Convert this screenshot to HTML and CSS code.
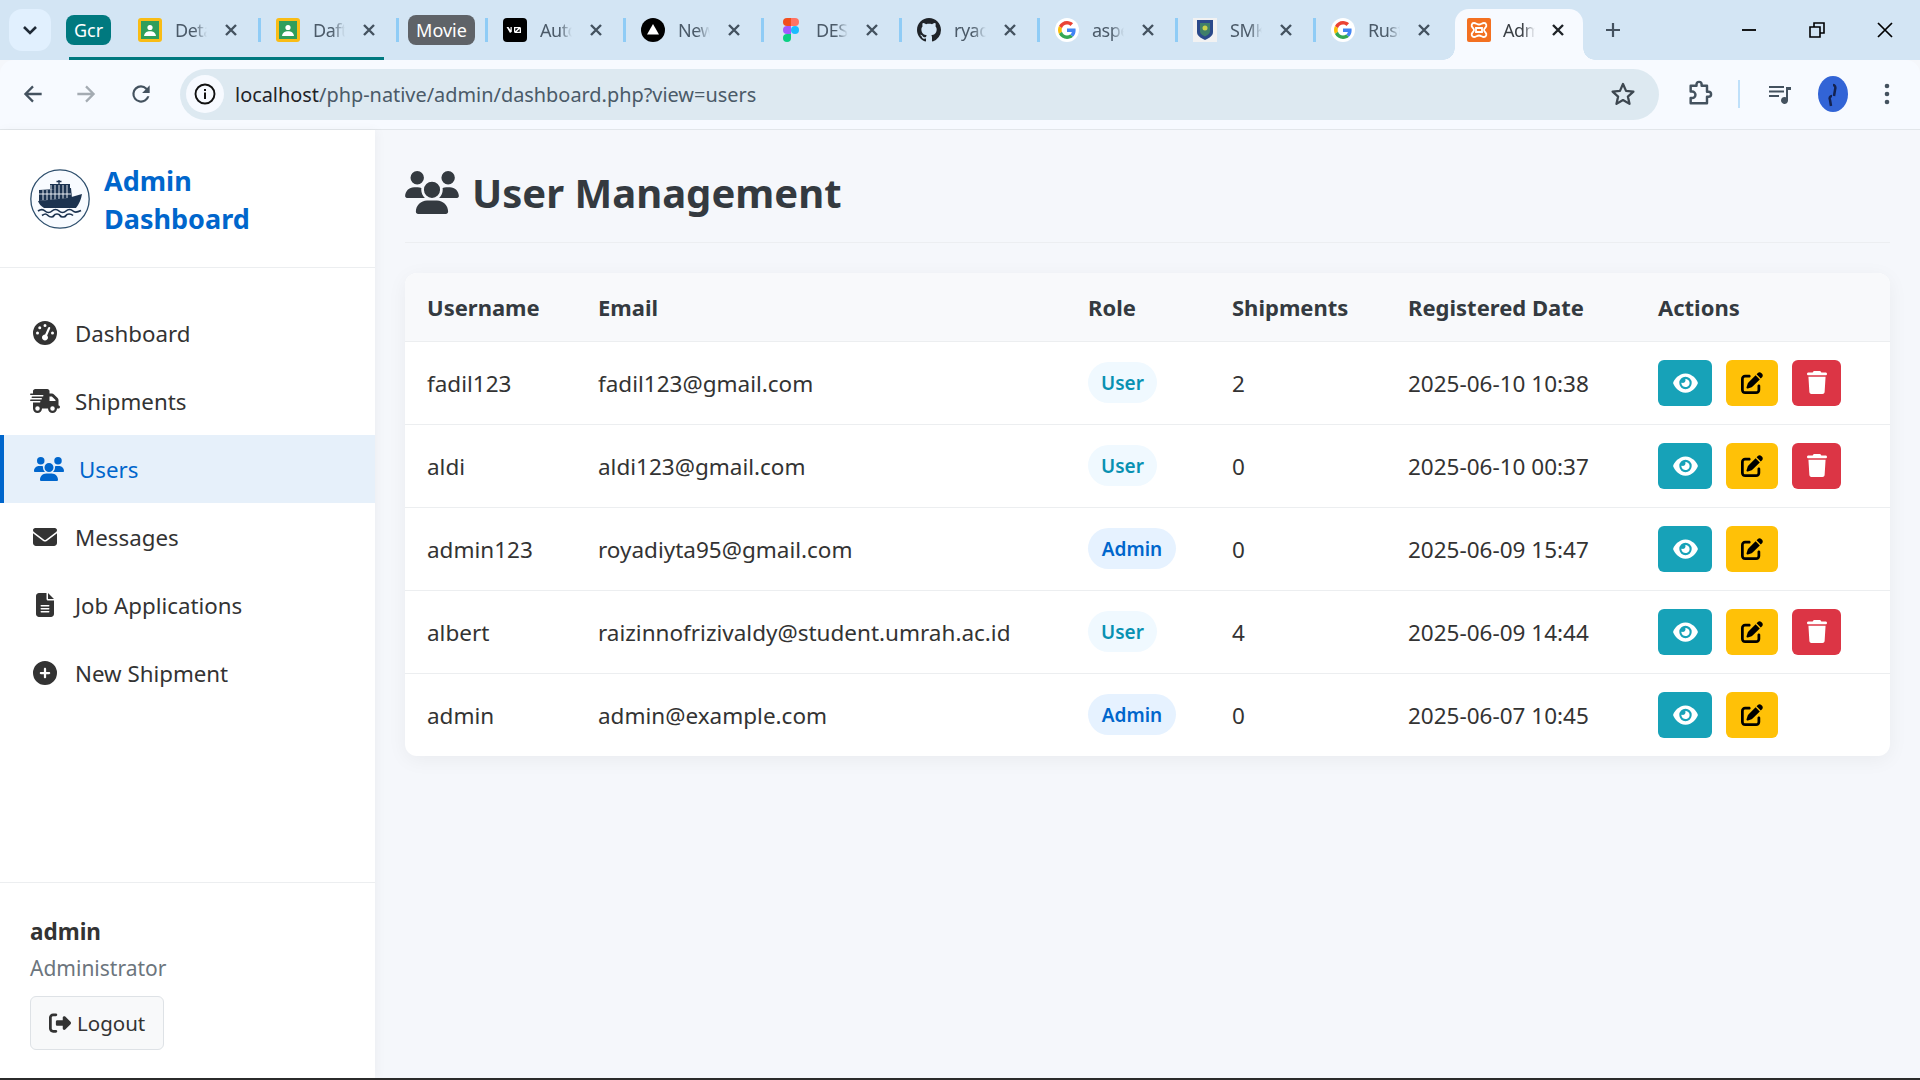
FILE: index.html
```html
<!DOCTYPE html>
<html lang="en">
<head>
    <meta charset="UTF-8">
    <meta name="viewport" content="width=device-width, initial-scale=1.0">
    <title>User Management</title>
    <link rel="stylesheet" href="styles.css">
</head>
<body>
    <svg class="sprites" aria-hidden="true">
        <symbol id="i-gauge" viewBox="0 0 512 512"><path d="M0 256a256 256 0 1 1 512 0A256 256 0 1 1 0 256zM288 96a32 32 0 1 0 -64 0 32 32 0 1 0 64 0zM256 416c35.3 0 64-28.7 64-64c0-17.4-6.9-33.1-18.1-44.6L366 161.7c5.3-12.1-.2-26.3-12.3-31.6s-26.3 .2-31.6 12.3L257.9 288c-.6 0-1.3 0-1.9 0c-35.3 0-64 28.7-64 64s28.7 64 64 64zM176 144a32 32 0 1 0 -64 0 32 32 0 1 0 64 0zM96 288a32 32 0 1 0 0-64 32 32 0 1 0 0 64zm352-32a32 32 0 1 0 -64 0 32 32 0 1 0 64 0z"/></symbol>
        <symbol id="i-truck" viewBox="0 0 640 512"><path d="M112 0C85.5 0 64 21.5 64 48V96H16c-8.8 0-16 7.2-16 16s7.2 16 16 16H64 272c8.8 0 16 7.2 16 16s-7.2 16-16 16H64 48c-8.8 0-16 7.2-16 16s7.2 16 16 16H64 240c8.8 0 16 7.2 16 16s-7.2 16-16 16H64 16c-8.8 0-16 7.2-16 16s7.2 16 16 16H64 208c8.8 0 16 7.2 16 16s-7.2 16-16 16H64V416c0 53 43 96 96 96s96-43 96-96H384c0 53 43 96 96 96s96-43 96-96h32c17.7 0 32-14.3 32-32s-14.3-32-32-32V288 256 237.3c0-17-6.7-33.3-18.7-45.3L512 114.7c-12-12-28.3-18.7-45.3-18.7H416V48c0-26.5-21.5-48-48-48H112zM544 237.3V256H416V160h50.7L544 237.3zM160 368a48 48 0 1 1 0 96 48 48 0 1 1 0-96zm272 48a48 48 0 1 1 96 0 48 48 0 1 1 -96 0z"/></symbol>
        <symbol id="i-users" viewBox="0 0 640 512"><path d="M144 0a80 80 0 1 1 0 160A80 80 0 1 1 144 0zM512 0a80 80 0 1 1 0 160A80 80 0 1 1 512 0zM0 298.7C0 239.8 47.8 192 106.7 192h42.7c15.9 0 31 3.5 44.6 9.7c-1.3 7.2-1.9 14.7-1.9 22.3c0 38.2 16.8 72.5 43.3 96c-.2 0-.4 0-.7 0H21.3C9.6 320 0 310.4 0 298.7zM405.3 320c-.2 0-.4 0-.7 0c26.6-23.5 43.3-57.8 43.3-96c0-7.6-.7-15-1.9-22.3c13.6-6.3 28.7-9.7 44.6-9.7h42.7C592.2 192 640 239.8 640 298.7c0 11.8-9.6 21.3-21.3 21.3H405.3zM224 224a96 96 0 1 1 192 0 96 96 0 1 1 -192 0zM128 485.3C128 411.7 187.7 352 261.3 352H378.7C452.3 352 512 411.7 512 485.3c0 14.7-11.9 26.7-26.7 26.7H154.7c-14.7 0-26.7-11.9-26.7-26.7z"/></symbol>
        <symbol id="i-envelope" viewBox="0 0 512 512"><path d="M48 64C21.5 64 0 85.5 0 112c0 15.1 7.1 29.3 19.2 38.4L236.8 313.6c11.4 8.5 27 8.5 38.4 0L492.8 150.4c12.1-9.1 19.2-23.3 19.2-38.4c0-26.5-21.5-48-48-48H48zM0 176V384c0 35.3 28.7 64 64 64H448c35.3 0 64-28.7 64-64V176L294.4 339.2c-22.8 17.1-54 17.1-76.8 0L0 176z"/></symbol>
        <symbol id="i-file" viewBox="0 0 384 512"><path d="M64 0C28.7 0 0 28.7 0 64V448c0 35.3 28.7 64 64 64H320c35.3 0 64-28.7 64-64V160H256c-17.7 0-32-14.3-32-32V0H64zM256 0V128H384L256 0zM112 256H272c8.8 0 16 7.2 16 16s-7.2 16-16 16H112c-8.8 0-16-7.2-16-16s7.2-16 16-16zm0 64H272c8.8 0 16 7.2 16 16s-7.2 16-16 16H112c-8.8 0-16-7.2-16-16s7.2-16 16-16zm0 64H272c8.8 0 16 7.2 16 16s-7.2 16-16 16H112c-8.8 0-16-7.2-16-16s7.2-16 16-16z"/></symbol>
        <symbol id="i-plus" viewBox="0 0 512 512"><path d="M256 512A256 256 0 1 0 256 0a256 256 0 1 0 0 512zM232 344V280H168c-13.3 0-24-10.7-24-24s10.7-24 24-24h64V168c0-13.3 10.7-24 24-24s24 10.7 24 24v64h64c13.3 0 24 10.7 24 24s-10.7 24-24 24H280v64c0 13.3-10.7 24-24 24s-24-10.7-24-24z"/></symbol>
        <symbol id="i-logout" viewBox="0 0 512 512"><path d="M377.9 105.9L500.7 228.7c7.2 7.2 11.3 17.1 11.3 27.3s-4.1 20.1-11.3 27.3L377.9 406.1c-6.4 6.4-15 9.9-24 9.9c-18.7 0-33.9-15.2-33.9-33.9l0-62.1-128 0c-17.7 0-32-14.3-32-32l0-64c0-17.7 14.3-32 32-32l128 0 0-62.1c0-18.7 15.2-33.9 33.9-33.9c9 0 17.6 3.6 24 9.9zM160 96L96 96c-17.7 0-32 14.3-32 32l0 256c0 17.7 14.3 32 32 32l64 0c17.7 0 32 14.3 32 32s-14.3 32-32 32l-64 0c-53 0-96-43-96-96L0 128C0 75 43 32 96 32l64 0c17.7 0 32 14.3 32 32s-14.3 32-32 32z"/></symbol>
        <symbol id="i-eye" viewBox="0 0 576 512"><path d="M288 32c-80.8 0-145.5 36.8-192.6 80.6C48.6 156 17.3 208 2.5 243.7c-3.3 7.9-3.3 16.7 0 24.6C17.3 304 48.6 356 95.4 399.4C142.5 443.2 207.2 480 288 480s145.5-36.8 192.6-80.6c46.8-43.5 78.1-95.4 93-131.1c3.3-7.9 3.3-16.7 0-24.6c-14.9-35.7-46.2-87.7-93-131.1C433.5 68.8 368.8 32 288 32zM144 256a144 144 0 1 1 288 0 144 144 0 1 1 -288 0zm144-64c0 35.3-28.7 64-64 64c-7.1 0-13.9-1.2-20.3-3.3c-5.5-1.8-11.9 1.6-11.7 7.4c.3 6.9 1.3 13.8 3.2 20.7c13.7 51.2 66.4 81.6 117.6 67.9s81.6-66.4 67.9-117.6c-11.1-41.5-47.8-69.4-88.6-71.1c-5.8-.2-9.2 6.1-7.4 11.7c2.1 6.4 3.3 13.2 3.3 20.3z"/></symbol>
        <symbol id="i-edit" viewBox="0 0 512 512"><path d="M471.6 21.7c-21.9-21.9-57.3-21.9-79.2 0L362.3 51.7l97.9 97.9 30.1-30.1c21.9-21.9 21.9-57.3 0-79.2L471.6 21.7zm-299.2 220c-6.1 6.1-10.8 13.6-13.5 21.9l-29.6 88.8c-2.9 8.6-.6 18.1 5.8 24.6s15.9 8.7 24.6 5.8l88.8-29.6c8.2-2.7 15.7-7.4 21.9-13.5L437.7 172.3 339.7 74.3 172.4 241.7zM96 64C43 64 0 107 0 160V416c0 53 43 96 96 96H352c53 0 96-43 96-96V320c0-17.7-14.3-32-32-32s-32 14.3-32 32v96c0 17.7-14.3 32-32 32H96c-17.7 0-32-14.3-32-32V160c0-17.7 14.3-32 32-32h96c17.7 0 32-14.3 32-32s-14.3-32-32-32H96z"/></symbol>
        <symbol id="i-trash" viewBox="0 0 448 512"><path d="M135.2 17.7L128 32H32C14.3 32 0 46.3 0 64S14.3 96 32 96H416c17.7 0 32-14.3 32-32s-14.3-32-32-32H320l-7.2-14.3C307.4 6.8 296.3 0 284.2 0H163.8c-12.1 0-23.2 6.8-28.6 17.7zM416 128H32L53.2 467c1.6 25.3 22.6 45 47.9 45H346.9c25.3 0 46.3-19.7 47.9-45L416 128z"/></symbol>
        <symbol id="i-close" viewBox="0 0 14 14"><path d="M2 2l10 10M12 2L2 12" fill="none" stroke="currentColor" stroke-width="2.4"/></symbol>
        <symbol id="f-classroom" viewBox="0 0 24 24"><rect x="0" y="0" width="24" height="24" rx="3" fill="#f9bc15"/><rect x="3" y="3" width="18" height="18" fill="#2f9e5c"/><circle cx="12" cy="9.5" r="2.6" fill="#fff"/><path d="M6 18c.5-3.500 3-4.800 6-4.800s5.500 1.300 6 4.800z" fill="#fff"/></symbol>
        <symbol id="f-google" viewBox="-8 -8 64 64"><circle cx="24" cy="24" r="32" fill="#fff"/><path fill="#EA4335" d="M24 9.500c3.540 0 6.710 1.220 9.210 3.600l6.850-6.850C35.900 2.380 30.470 0 24 0 14.620 0 6.510 5.380 2.560 13.220l7.980 6.190C12.430 13.720 17.740 9.500 24 9.500z"/><path fill="#4285F4" d="M46.980 24.550c0-1.570-.15-3.090-.38-4.550H24v9.020h12.940c-.58 2.960-2.260 5.480-4.780 7.180l7.730 6c4.510-4.180 7.090-10.360 7.090-17.650z"/><path fill="#FBBC05" d="M10.530 28.590c-.48-1.450-.76-2.990-.76-4.590s.27-3.140.76-4.590l-7.980-6.190C.92 16.460 0 20.120 0 24c0 3.880.92 7.540 2.560 10.780l7.970-6.190z"/><path fill="#34A853" d="M24 48c6.480 0 11.930-2.130 15.890-5.810l-7.730-6c-2.150 1.450-4.920 2.300-8.160 2.300-6.260 0-11.570-4.220-13.470-9.910l-7.980 6.190C6.510 42.620 14.620 48 24 48z"/></symbol>
    </svg>

    <!-- browser tabs -->
    <header class="tabbar">
        <button class="tab-menu">
            <svg width="16" height="10" viewBox="0 0 16 10"><path d="M2 2l6 6 6-6" fill="none" stroke="#1f2a36" stroke-width="2.6"/></svg>
        </button>
        <div class="tab-group">
            <span class="chip chip-teal">Gcr</span>
            <div class="tab">
                <svg class="favicon"><use href="#f-classroom"/></svg>
                <span class="tab-title">Detail</span>
                <svg class="tab-x"><use href="#i-close"/></svg>
            </div>
            <div class="tab">
                <svg class="favicon"><use href="#f-classroom"/></svg>
                <span class="tab-title">Daftar</span>
                <svg class="tab-x"><use href="#i-close"/></svg>
            </div>
        </div>
        <span class="chip chip-grey">Movie</span>
        <span class="tab-sep"></span>
        <div class="tab">
            <svg class="favicon" viewBox="0 0 24 24"><rect width="24" height="24" rx="4" fill="#000"/><path d="M3.500 9l3.500 6 1.800-1.200V9h-1.300v3L5.500 9zM11 9h5.500c1 0 1.500.6 1.500 1.500V15h-5.500c-1 0-1.500-.6-1.500-1.500zm1.300 1.300v3l3-3zm4.400.6l-3 2.900h3z" fill="#fff"/></svg>
            <span class="tab-title">Auto</span>
            <svg class="tab-x"><use href="#i-close"/></svg>
        </div>
        <div class="tab">
            <svg class="favicon" viewBox="0 0 24 24"><circle cx="12" cy="12" r="12" fill="#000"/><path d="M12 6l6 10.500H6z" fill="#fff"/></svg>
            <span class="tab-title">New</span>
            <svg class="tab-x"><use href="#i-close"/></svg>
        </div>
        <div class="tab">
            <svg class="favicon" viewBox="0 0 24 24"><path d="M8 0h4v8H8a4 4 0 0 1 0-8z" fill="#f24e1e"/><path d="M12 0h4a4 4 0 0 1 0 8h-4z" fill="#ff7262"/><path d="M8 8h4v8H8a4 4 0 0 1 0-8z" fill="#a259ff"/><circle cx="16" cy="12" r="4" fill="#1abcfe"/><path d="M8 16h4v4a4 4 0 1 1-4-4z" fill="#0acf83"/></svg>
            <span class="tab-title">DESAIN</span>
            <svg class="tab-x"><use href="#i-close"/></svg>
        </div>
        <div class="tab">
            <svg class="favicon" viewBox="0 0 16 16"><path fill="#1f2328" d="M8 0C3.580 0 0 3.580 0 8c0 3.540 2.290 6.530 5.470 7.590.4.070.55-.17.55-.38 0-.19-.01-.82-.01-1.490-2.010.37-2.530-.49-2.690-.94-.09-.23-.48-.94-.82-1.130-.28-.15-.68-.52-.01-.53.63-.01 1.080.58 1.230.82.720 1.210 1.870.87 2.330.66.070-.52.280-.87.510-1.070-1.780-.2-3.640-.89-3.640-3.950 0-.87.310-1.590.82-2.150-.08-.2-.36-1.020.08-2.120 0 0 .67-.21 2.200.82.640-.18 1.320-.27 2-.27.680 0 1.360.09 2 .27 1.530-1.040 2.200-.82 2.200-.82.440 1.100.160 1.920.080 2.120.510.56.820 1.270.820 2.150 0 3.070-1.870 3.750-3.650 3.950.290.25.540.73.540 1.480 0 1.070-.01 1.930-.01 2.200 0 .21.150.46.550.38A8.013 8.013 0 0 0 16 8c0-4.420-3.580-8-8-8z"/></svg>
            <span class="tab-title">ryadi</span>
            <svg class="tab-x"><use href="#i-close"/></svg>
        </div>
        <div class="tab">
            <svg class="favicon"><use href="#f-google"/></svg>
            <span class="tab-title">aspek</span>
            <svg class="tab-x"><use href="#i-close"/></svg>
        </div>
        <div class="tab">
            <svg class="favicon" viewBox="0 0 24 24"><rect width="24" height="24" fill="#f2f2f2"/><path d="M4 2h16v12c0 4-4 6-8 8-4-2-8-4-8-8z" fill="#2b4a8b"/><path d="M7 5h10v8c0 3-2.500 4-5 5.500C9.500 17 7 16 7 13z" fill="#3f7f6a"/><circle cx="12" cy="10" r="2.500" fill="#c9d24a"/></svg>
            <span class="tab-title">SMK</span>
            <svg class="tab-x"><use href="#i-close"/></svg>
        </div>
        <div class="tab tab-nosep">
            <svg class="favicon"><use href="#f-google"/></svg>
            <span class="tab-title">Rust</span>
            <svg class="tab-x"><use href="#i-close"/></svg>
        </div>
        <div class="tab tab-active">
            <svg class="favicon" viewBox="0 0 24 24"><rect width="24" height="24" rx="2" fill="#f37021"/><path d="M7 5c2 0 3 1.500 5 1.500S15 5 17 5c2.500 0 3 3 1.500 4.500-1 1-1.500 1.500-1.500 2.500s.5 1.500 1.500 2.500C20 16 19.500 19 17 19c-2 0-3-1.500-5-1.500S9 19 7 19c-2.500 0-3-3-1.500-4.500 1-1 1.500-1.500 1.500-2.500s-.5-1.500-1.500-2.500C4 8 4.500 5 7 5zm2 5v4h6v-4z" fill="none" stroke="#fff" stroke-width="1.800"/></svg>
            <span class="tab-title">Admin</span>
            <svg class="tab-x"><use href="#i-close"/></svg>
        </div>
        <svg class="tab-new" viewBox="0 0 16 16"><path d="M8 1v14M1 8h14" stroke="#44525f" stroke-width="2.200"/></svg>
        <div class="win-controls">
            <svg class="win-btn" viewBox="0 0 16 16"><path d="M1 8h14" stroke="#000" stroke-width="1.800"/></svg>
            <svg class="win-btn" viewBox="0 0 16 16"><path d="M1 5h10v10H1zM5 5V1h10v10h-4" fill="none" stroke="#000" stroke-width="1.600"/></svg>
            <svg class="win-btn" viewBox="0 0 16 16"><path d="M1 1l14 14M15 1L1 15" stroke="#000" stroke-width="1.700"/></svg>
        </div>
    </header>

    <!-- browser toolbar -->
    <div class="toolbar">
        <svg class="nav-arrow" viewBox="0 0 24 24"><path d="M20 12H5M12 5l-7 7 7 7" fill="none" stroke="#44525f" stroke-width="2.100"/></svg>
        <svg class="nav-arrow nav-forward" viewBox="0 0 24 24"><path d="M4 12h15M12 5l7 7-7 7" fill="none" stroke="#a4abb2" stroke-width="2.100"/></svg>
        <svg class="nav-arrow nav-reload" viewBox="0 0 24 24"><path fill="#44525f" d="M17.650 6.350A7.960 7.960 0 0 0 12 4a8 8 0 1 0 7.750 10h-2.080A6 6 0 1 1 12 6c1.660 0 3.140.69 4.220 1.780L13 11h7V4l-2.350 2.350z"/></svg>
        <div class="omnibox">
            <span class="site-info">
                <svg width="22" height="22" viewBox="0 0 22 22"><circle cx="11" cy="11" r="9.500" fill="none" stroke="#111" stroke-width="1.900"/><path d="M11 9.500v6.500M11 6v2" stroke="#111" stroke-width="2"/></svg>
            </span>
            <span class="url"><b>localhost</b>/php-native/admin/dashboard.php?view=users</span>
            <svg class="star" viewBox="0 0 24 24"><path d="M12 2.800l2.800 6.300 6.800.7-5.100 4.600 1.500 6.700-6-3.500-6 3.500 1.500-6.700-5.100-4.600 6.800-.7z" fill="none" stroke="#3d4750" stroke-width="2.100" stroke-linejoin="round"/></svg>
        </div>
        <svg class="tool-icon tool-puzzle" viewBox="0 0 24 24"><path d="M4 5h5V3.800a2.200 2.200 0 0 1 4.400 0V5H18v5h1.300a2.200 2.200 0 0 1 0 4.400H18V20H4v-4.500h1.300a2.800 2.800 0 0 0 0-5.600H4z" fill="none" stroke="#44525f" stroke-width="2.100" stroke-linejoin="round"/></svg>
        <span class="tool-sep"></span>
        <svg class="tool-icon tool-music" viewBox="0 0 24 24"><path d="M1 5h15M1 9.500h15M1 14h10" stroke="#44525f" stroke-width="2"/><path d="M18 5h5v3h-3v10.500a3.500 3.500 0 1 1-2-3.200z" fill="#44525f"/></svg>
        <span class="avatar">
            <svg width="30" height="36" viewBox="0 0 30 36"><path d="M15 9c2 0 3 2 2 5l-1 6M14 20c-2 0-3 2-2 4l1 6" fill="none" stroke="#14224f" stroke-width="2.500"/></svg>
        </span>
        <svg class="tool-icon tool-dots" viewBox="0 0 6 24"><circle cx="3" cy="4" r="2.300" fill="#44525f"/><circle cx="3" cy="12" r="2.300" fill="#44525f"/><circle cx="3" cy="20" r="2.300" fill="#44525f"/></svg>
    </div>

    <div class="app">
        <aside class="sidebar">
            <div class="brand">
                <svg class="brand-logo" viewBox="0 0 60 60">
                    <circle cx="30" cy="30" r="29.200" fill="#f8fbff" stroke="#2e4f6d" stroke-width="1.300"/>
                    <path d="M29 11v4M26.500 12.500h5" fill="none" stroke="#1c3350" stroke-width="1.300"/>
                    <path d="M20 15h20v5H20z" fill="#1c3350"/>
                    <path d="M9 21l32-2 1 10-33 3z" fill="#1c3350"/>
                    <path d="M13 21v10M17 21v10M21 16v15M25 16v15M29 16v14M33 16v14M37 16v13M9 25h32" stroke="#f8fbff" stroke-width=".9"/>
                    <path d="M8 32l30-3 14-4c-1 6-3 10-6 14H14c-3-2-5-4-6-7z" fill="#1c3350"/>
                    <path d="M8 42c3-2 5-2 7 0s5 2 7 0 5-2 7 0 5 2 7 0 5-2 7 0 5 1 8-.5M12 46.500c3-2 4-2 6 0s5 2 6 0 5-2 6 0 5 2 6 0 5-2 7 0" fill="none" stroke="#1c3350" stroke-width="1.700"/>
                </svg>
                <h1 class="brand-title">Admin Dashboard</h1>
            </div>
            <nav class="nav">
                <a class="nav-item"><span class="nav-icon"><svg width="24" height="24"><use href="#i-gauge"/></svg></span>Dashboard</a>
                <a class="nav-item"><span class="nav-icon"><svg width="30" height="24"><use href="#i-truck"/></svg></span>Shipments</a>
                <a class="nav-item active"><span class="nav-icon"><svg width="30" height="24"><use href="#i-users"/></svg></span>Users</a>
                <a class="nav-item"><span class="nav-icon"><svg width="24" height="24"><use href="#i-envelope"/></svg></span>Messages</a>
                <a class="nav-item"><span class="nav-icon"><svg width="18" height="24"><use href="#i-file"/></svg></span>Job Applications</a>
                <a class="nav-item"><span class="nav-icon"><svg width="24" height="24"><use href="#i-plus"/></svg></span>New Shipment</a>
            </nav>
            <div class="side-footer">
                <div class="who">admin</div>
                <div class="who-role">Administrator</div>
                <a class="logout"><svg width="24" height="24"><use href="#i-logout"/></svg>Logout</a>
            </div>
        </aside>

        <main class="content">
            <div class="page-head">
                <svg class="page-icon"><use href="#i-users"/></svg>
                <h2>User Management</h2>
            </div>
            <div class="card">
                <table class="users">
                    <colgroup>
                        <col class="c-user"><col class="c-mail"><col class="c-role"><col class="c-ship"><col class="c-date"><col>
                    </colgroup>
                    <thead>
                        <tr><th>Username</th><th>Email</th><th>Role</th><th>Shipments</th><th>Registered Date</th><th>Actions</th></tr>
                    </thead>
                    <tbody>
                        <tr>
                            <td>fadil123</td><td>fadil123@gmail.com</td>
                            <td><span class="badge badge-user">User</span></td>
                            <td>2</td><td>2025-06-10 10:38</td>
                            <td><div class="actions">
                                <a class="btn btn-view"><svg class="ic-eye"><use href="#i-eye"/></svg></a>
                                <a class="btn btn-edit"><svg class="ic-edit"><use href="#i-edit"/></svg></a>
                                <a class="btn btn-del"><svg class="ic-trash"><use href="#i-trash"/></svg></a>
                            </div></td>
                        </tr>
                        <tr>
                            <td>aldi</td><td>aldi123@gmail.com</td>
                            <td><span class="badge badge-user">User</span></td>
                            <td>0</td><td>2025-06-10 00:37</td>
                            <td><div class="actions">
                                <a class="btn btn-view"><svg class="ic-eye"><use href="#i-eye"/></svg></a>
                                <a class="btn btn-edit"><svg class="ic-edit"><use href="#i-edit"/></svg></a>
                                <a class="btn btn-del"><svg class="ic-trash"><use href="#i-trash"/></svg></a>
                            </div></td>
                        </tr>
                        <tr>
                            <td>admin123</td><td>royadiyta95@gmail.com</td>
                            <td><span class="badge badge-admin">Admin</span></td>
                            <td>0</td><td>2025-06-09 15:47</td>
                            <td><div class="actions">
                                <a class="btn btn-view"><svg class="ic-eye"><use href="#i-eye"/></svg></a>
                                <a class="btn btn-edit"><svg class="ic-edit"><use href="#i-edit"/></svg></a>
                            </div></td>
                        </tr>
                        <tr>
                            <td>albert</td><td>raizinnofrizivaldy@student.umrah.ac.id</td>
                            <td><span class="badge badge-user">User</span></td>
                            <td>4</td><td>2025-06-09 14:44</td>
                            <td><div class="actions">
                                <a class="btn btn-view"><svg class="ic-eye"><use href="#i-eye"/></svg></a>
                                <a class="btn btn-edit"><svg class="ic-edit"><use href="#i-edit"/></svg></a>
                                <a class="btn btn-del"><svg class="ic-trash"><use href="#i-trash"/></svg></a>
                            </div></td>
                        </tr>
                        <tr>
                            <td>admin</td><td>admin@example.com</td>
                            <td><span class="badge badge-admin">Admin</span></td>
                            <td>0</td><td>2025-06-07 10:45</td>
                            <td><div class="actions">
                                <a class="btn btn-view"><svg class="ic-eye"><use href="#i-eye"/></svg></a>
                                <a class="btn btn-edit"><svg class="ic-edit"><use href="#i-edit"/></svg></a>
                            </div></td>
                        </tr>
                    </tbody>
                </table>
            </div>
        </main>
    </div>
    <div class="taskbar-edge"></div>
</body>
</html>
```

FILE: styles.css
```css
* { margin: 0; padding: 0; box-sizing: border-box; }

html, body { height: 100%; }

body {
    display: flex;
    flex-direction: column;
    overflow: hidden;
    font-family: "Noto Sans", "Open Sans", sans-serif;
    color: #333;
    background: #f5f7fb;
}

.sprites { display: none; }

/* Browser tabs */
.tabbar {
    display: flex;
    align-items: center;
    flex: 0 0 60px;
    height: 60px;
    padding-left: 9px;
    background: #d3e5f4;
}

.tab-menu {
    flex: 0 0 42px;
    height: 42px;
    display: flex;
    align-items: center;
    justify-content: center;
    border: 0;
    border-radius: 13px;
    background: #e1f0fe;
}

.tab-group {
    position: relative;
    display: flex;
    align-items: center;
    height: 60px;
    margin-left: 15px;
}

.tab-group::after {
    content: "";
    position: absolute;
    left: 3px;
    right: 15px;
    bottom: 0;
    height: 3px;
    background: #00797f;
}

.chip {
    display: flex;
    align-items: center;
    justify-content: center;
    height: 30px;
    border-radius: 8px;
    color: #fff;
    font-size: 18px;
}

.chip-teal { flex: 0 0 45px; margin-right: 12px; background: #00797f; }
.chip-grey { flex: 0 0 67px; margin-left: 9px; background: #5f6368; }

.tab-sep {
    flex: 0 0 3px;
    height: 24px;
    margin-left: 10px;
    background: #8fccf6;
}

.tab {
    position: relative;
    display: flex;
    align-items: center;
    flex: 0 0 138px;
    height: 60px;
    padding-left: 15px;
}

.tab::after {
    content: "";
    position: absolute;
    top: 18px;
    right: 0;
    width: 3px;
    height: 24px;
    background: #8fccf6;
}

.tab-nosep::after { display: none; }

.favicon {
    flex: 0 0 24px;
    width: 24px;
    height: 24px;
}

.tab-title {
    flex: 0 0 32px;
    width: 32px;
    margin-left: 13px;
    overflow: hidden;
    white-space: nowrap;
    font-size: 18px;
    letter-spacing: -.5px;
    color: #4b5a68;
    -webkit-mask-image: linear-gradient(to right, #000 60%, transparent);
    mask-image: linear-gradient(to right, #000 60%, transparent);
}

.tab-x {
    flex: 0 0 14px;
    width: 14px;
    height: 14px;
    margin-left: 17px;
    color: #44525f;
}

.tab-active {
    flex: 0 0 128px;
    height: 51px;
    margin: 9px 0 0 1px;
    padding: 0 0 9px 12px;
    border-radius: 14px 14px 0 0;
    background: #f7faff;
}

/* little flares where the active tab meets the toolbar */
.tab-active::before,
.tab-active::after {
    content: "";
    position: absolute;
    top: auto;
    bottom: 0;
    width: 12px;
    height: 12px;
    background: radial-gradient(circle at 0 0, #d3e5f4 11.5px, #f7faff 12px);
}

.tab-active::before { left: -12px; right: auto; transform: none; }
.tab-active::after { right: -12px; background: radial-gradient(circle at 100% 0, #d3e5f4 11.5px, #f7faff 12px); }

.tab-active .tab-title { color: #3a3f45; margin-left: 12px; }
.tab-active .tab-x { margin-left: 16px; color: #1f2328; }

.tab-new {
    flex: 0 0 16px;
    width: 16px;
    height: 16px;
    margin-left: 22px;
}

.win-controls {
    display: flex;
    align-items: center;
    margin-left: auto;
    padding-right: 27px;
    gap: 52px;
}

.win-btn { width: 16px; height: 16px; }

/* Browser toolbar */
.toolbar {
    display: flex;
    align-items: center;
    flex: 0 0 70px;
    height: 70px;
    padding: 0 0 1px 20px;
    border-radius: 14px 14px 0 0;
    border-bottom: 1px solid #e2e6ea;
    background: #f7faff;
}

.nav-arrow { flex: 0 0 26px; width: 26px; height: 26px; }
.nav-forward { margin-left: 27px; }
.nav-reload { margin-left: 29px; }

.omnibox {
    display: flex;
    align-items: center;
    flex: 0 0 1479px;
    height: 51px;
    margin-left: 26px;
    padding: 0 23px 0 6px;
    border-radius: 26px;
    background: #dde9f1;
}

.site-info {
    display: flex;
    align-items: center;
    justify-content: center;
    flex: 0 0 38px;
    height: 38px;
    border-radius: 50%;
    background: #f7faff;
}

.url {
    flex: 1;
    margin-left: 11px;
    font-size: 19.9px;
    color: #4a5a68;
    white-space: nowrap;
}

.url b { font-weight: 400; color: #1f2328; }

.star { width: 26px; height: 26px; }

.tool-icon { flex: none; }
.tool-puzzle { width: 28px; height: 28px; margin-left: 27px; }
.tool-sep { flex: 0 0 2px; height: 28px; margin-left: 24px; background: #bfe0fa; }
.tool-music { width: 24px; height: 24px; margin-left: 28px; }

.avatar {
    flex: 0 0 30px;
    height: 36px;
    margin-left: 26px;
    border-radius: 50%;
    background: #3264d6;
}

.tool-dots { width: 6px; height: 24px; margin-left: 36px; }

/* Page */
.app {
    display: flex;
    flex: 1;
    min-height: 0;
}

.sidebar {
    display: flex;
    flex-direction: column;
    flex: 0 0 375px;
    background: #fff;
    box-shadow: 2px 0 10px rgba(0, 0, 0, .04);
}

.brand {
    display: flex;
    align-items: center;
    gap: 14px;
    height: 138px;
    padding: 2px 30px 0;
    border-bottom: 1px solid #eceef0;
}

.brand-logo { flex: 0 0 60px; width: 60px; height: 60px; margin-top: -2px; }

.brand-title {
    width: 190px;
    font-size: 27px;
    font-weight: 700;
    line-height: 38px;
    color: #0066cc;
}

.nav {
    flex: 1;
    padding-top: 31px;
}

.nav-item {
    display: flex;
    align-items: center;
    height: 68px;
    padding-left: 30px;
    font-size: 22.3px;
    color: #333;
}

.nav-item svg { fill: currentColor; }

.nav-icon {
    display: flex;
    align-items: center;
    justify-content: center;
    flex: 0 0 30px;
    margin-right: 15px;
}

.nav-item.active {
    border-left: 4px solid #0066cc;
    background: #e6f0fa;
    color: #0066cc;
}

.side-footer {
    height: 196px;
    padding: 31px 30px 0;
    border-top: 1px solid #eceef0;
}

.who {
    font-size: 22.5px;
    font-weight: 700;
    line-height: 36px;
}

.who-role {
    font-size: 21px;
    line-height: 36px;
    color: #6c757d;
}

.logout {
    display: inline-flex;
    align-items: center;
    gap: 6px;
    height: 54px;
    margin-top: 10px;
    padding: 0 18px;
    border: 1px solid #dee2e6;
    border-radius: 6px;
    background: #f8f9fa;
    font-size: 20.5px;
}

.logout svg { width: 22px; height: 22px; fill: #333; }

.content {
    flex: 1;
    padding: 0 30px;
    min-width: 0;
}

.page-head {
    display: flex;
    align-items: center;
    gap: 13px;
    height: 113px;
    padding-top: 13px;
    border-bottom: 1px solid #eceef1;
    color: #343a40;
}

.page-icon { flex: 0 0 54px; width: 54px; height: 43px; fill: currentColor; }

.page-head h2 {
    font-size: 40px;
    font-weight: 700;
}

.card {
    margin-top: 30px;
    border-radius: 12px;
    overflow: hidden;
    background: #fff;
    box-shadow: 0 4px 20px rgba(0, 0, 0, .05);
}

/* Users table */
.users {
    width: 100%;
    border-collapse: collapse;
    table-layout: fixed;
    font-size: 22.5px;
}

.c-user { width: 171px; }
.c-mail { width: 490px; }
.c-role { width: 144px; }
.c-ship { width: 176px; }
.c-date { width: 250px; }

.users th {
    height: 68px;
    padding: 0 22px;
    border-bottom: 1px solid #eceef0;
    background: #f8f9fb;
    text-align: left;
    font-size: 22px;
    font-weight: 700;
    color: #343a40;
}

.users td {
    height: 83px;
    padding: 2px 22px 0;
    border-bottom: 1px solid #eceef0;
    white-space: nowrap;
}

.users tbody tr:last-child td { border-bottom: 0; }

.badge {
    display: inline-flex;
    align-items: center;
    justify-content: center;
    height: 41px;
    margin-top: -2px;
    border-radius: 21px;
    font-size: 19px;
    font-weight: 600;
    vertical-align: middle;
}

.badge-user { width: 69px; background: #f0f9ff; color: #0891b2; }
.badge-admin { width: 88px; background: #e6f2ff; color: #0066cc; }

.actions { display: flex; gap: 14px; margin-top: -2px; }

.btn {
    display: flex;
    align-items: center;
    justify-content: center;
    height: 46px;
    border-radius: 6px;
}

.btn-view { width: 54px; background: #17a2b8; fill: #fff; }
.btn-edit { width: 52px; background: #ffc107; fill: #000; }
.btn-del { width: 49px; background: #dc3545; fill: #fff; }

.ic-eye { width: 25px; height: 22px; }
.ic-edit { width: 22px; height: 22px; }
.ic-trash { width: 20px; height: 23px; }

.taskbar-edge {
    flex: 0 0 2px;
    background: #2b2b2b;
}
```
